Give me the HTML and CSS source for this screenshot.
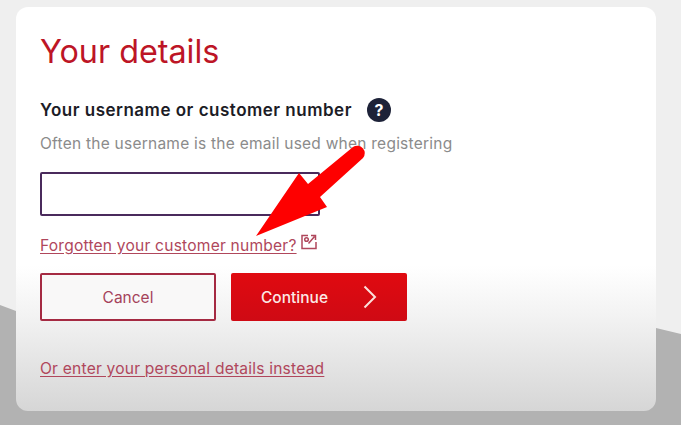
FILE: index.html
```html
<!DOCTYPE html>
<html lang="en">
<head>
  <meta charset="UTF-8" />
  <title>Your details</title>
  <link rel="stylesheet" href="styles.css">
</head>
<body>

<svg class="backdrop" viewBox="0 0 681 425" aria-hidden="true">
  <path d="M0 305 L16 311 L656 328 L681 334 L681 425 L0 425 Z" fill="#b2b2b2" />
</svg>

<div class="card">
  <h1>Your details</h1>

  <div class="label-row">
    <label for="username">Your username or customer number</label>
    <span class="help">?</span>
  </div>
  <p class="hint">Often the username is the email used when registering</p>

  <input type="text" id="username" />

  <div class="forgot">
    <a href="#">Forgotten your customer number?</a>
    <svg class="ext-icon" viewBox="0 0 16 16" aria-hidden="true">
      <path d="M7 1.500 H1 V14.500 H15 V8" />
      <path d="M7.500 9.500 L13.500 2.500 M10 1.500 H14.500 V6" />
      <circle cx="5.500" cy="5.500" r="1.800" />
    </svg>
  </div>

  <div class="actions">
    <button class="btn btn-cancel">Cancel</button>
    <button class="btn btn-continue">
      <span>Continue</span>
      <svg class="chevron" viewBox="0 0 14 24" aria-hidden="true"><path d="M1.500 1.500 L12 12 L1.500 22.500" /></svg>
    </button>
  </div>

  <a class="alt-link" href="#">Or enter your personal details instead</a>
</div>

<svg class="arrow" viewBox="0 0 681 425" aria-hidden="true">
  <path d="M256 236 L299 173 L308 184 L353 147 A 7.500 7.500 0 0 1 363 158 L320 197 L327 207 Z" fill="#fe0000" />
</svg>

</body>
</html>
```

FILE: styles.css
```css
html, body {
  height: 100%;
}

body {
  margin: 0;
  height: 425px;
  overflow: hidden;
  position: relative;
  box-sizing: border-box;
  padding: 7px 25px 14px 16px;
  background-color: #efefef;
  font-family: 'Inter', sans-serif;
}

.backdrop, .arrow {
  position: absolute;
  top: 0;
  left: 0;
  width: 681px;
  height: 425px;
}

.card {
  position: relative;
  box-sizing: border-box;
  height: 404px;
  padding: 27px 24px 0;
  border-radius: 12px;
  background: linear-gradient(to bottom, #ffffff 0%, #ffffff 64%, #f3f3f3 76%, #d6d6d6 100%);
}

h1 {
  margin: 0 0 27px 0;
  font-size: 32.300px;
  line-height: 36px;
  font-weight: 400;
  color: #bd1526;
}

.label-row {
  display: flex;
  align-items: center;
  gap: 15px;
  height: 26px;
}

label {
  font-size: 17px;
  font-weight: 600;
  letter-spacing: 0.5px;
  color: #1c1c26;
}

.help {
  width: 24px;
  height: 24px;
  border-radius: 50%;
  background-color: #1d2238;
  color: white;
  font-size: 16px;
  font-weight: 700;
  line-height: 24px;
  text-align: center;
}

.hint {
  margin: 11px 0 18px 0;
  font-size: 15.500px;
  line-height: 20px;
  letter-spacing: 0.24px;
  color: #8b8b8b;
}

input {
  display: block;
  box-sizing: border-box;
  width: 280px;
  height: 44px;
  margin: 0;
  background: white;
  border: 2px solid #4a2a5c;
  border-radius: 2px;
}

.forgot {
  display: flex;
  align-items: flex-start;
  gap: 4px;
  margin-top: 20px;
  height: 20px;
}

a {
  font-size: 15.600px;
  line-height: 20px;
  letter-spacing: 0.2px;
  color: #b0475c;
  text-decoration: underline;
  text-underline-offset: 2px;
}

.ext-icon {
  width: 16px;
  height: 16px;
  margin-top: -2px;
  fill: none;
  stroke: #b0475c;
  stroke-width: 1.500;
}

.actions {
  display: flex;
  gap: 15px;
  margin-top: 17px;
  margin-bottom: 38px;
}

.btn {
  box-sizing: border-box;
  width: 176px;
  height: 48px;
  border-radius: 2px;
  font-family: inherit;
  font-size: 15.500px;
}

.btn-cancel {
  background: #f9f8f8;
  border: 2px solid #a52a42;
  color: #a5425a;
}

.btn-continue {
  display: flex;
  align-items: center;
  justify-content: space-between;
  padding: 0 30px;
  background: linear-gradient(to bottom, #e00a10, #cf0a14);
  border: none;
  color: #fbe9e6;
  font-weight: 500;
}

.chevron {
  width: 14px;
  height: 24px;
  fill: none;
  stroke: #fbe0dc;
  stroke-width: 2;
}

.alt-link {
  display: block;
  width: fit-content;
}
```
